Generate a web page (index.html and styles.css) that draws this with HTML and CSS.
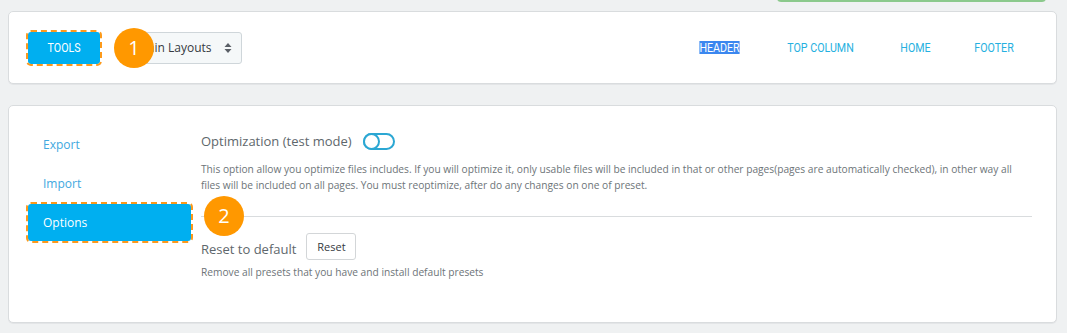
FILE: index.html
```html
<!DOCTYPE html>
<html>
<head>
<meta charset="utf-8">
<link rel="stylesheet" href="styles.css">
</head>
<body>
<div class="alert-strip"></div>
<div class="card toolbar">
  <div class="tools-wrap">
    <button class="tools-btn"><span class="cond">TOOLS</span></button>
    <span class="badge badge-1">1</span>
  </div>
  <div class="layout-select">
    <span class="sel-text">Main Layouts</span>
    <svg class="sel-arrow" width="8" height="12" viewBox="0 0 8 12"><path d="M4 1 L7.5 5 H0.5 Z M4 11 L7.5 7 H0.5 Z" fill="#5a5f66"/></svg>
  </div>
  <nav class="nav">
    <a class="nav-item"><span class="cond sel">HEADER</span></a>
    <a class="nav-item"><span class="cond">TOP COLUMN</span></a>
    <a class="nav-item"><span class="cond">HOME</span></a>
    <a class="nav-item"><span class="cond">FOOTER</span></a>
  </nav>
</div>

<div class="card panel">
  <ul class="tabs">
    <li class="tab">Export</li>
    <li class="tab">Import</li>
    <li class="tab active">Options</li>
  </ul>
  <div class="content">
    <div class="opt-row">
      <span class="opt-title">Optimization (test mode)</span>
      <svg class="toggle" width="32" height="17" viewBox="0 0 32 17"><rect x="1" y="1" width="30" height="15" rx="7.5" fill="none" stroke="#2ba7d3" stroke-width="2"/><circle cx="8.5" cy="8.5" r="7.5" fill="#fff" stroke="#2ba7d3" stroke-width="2"/></svg>
    </div>
    <p class="desc desc-opt">This option allow you optimize files includes. If you will optimize it, only usable files will be included in that or other pages(pages are automatically checked), in other way all files will be included on all pages. You must reoptimize, after do any changes on one of preset.</p>
    <div class="divider">
      <span class="badge badge-2">2</span>
    </div>
    <div class="reset-row">
      <span class="opt-title">Reset to default</span>
      <button class="reset-btn">Reset</button>
    </div>
    <p class="desc desc-reset">Remove all presets that you have and install default presets</p>
  </div>
</div>
</body>
</html>
```

FILE: styles.css
```css
* { box-sizing: border-box; }
html, body { margin: 0; }
body {
  background: #eff1f2;
  padding: 0 10px 0 8px;
  font-family: "Open Sans", "DejaVu Sans", sans-serif;
  position: relative;
  height: 333px;
  overflow: hidden;
}
.alert-strip {
  position: absolute;
  left: 777px;
  top: -6px;
  width: 269px;
  height: 8px;
  background: #8bc98c;
  border-radius: 0 0 4px 4px;
}
.card {
  background: #fff;
  border: 1px solid #d9dcde;
  border-radius: 5px;
  box-shadow: 0 1px 0 #e3e5e7;
}
.toolbar {
  margin-top: 11px;
  height: 73px;
  display: flex;
  align-items: center;
  padding: 0 19px;
}
.cond {
  display: inline-block;
  font-family: "Roboto", sans-serif;
  transform: scaleX(0.82);
  transform-origin: center;
}
.tools-wrap { position: relative; z-index: 2; }
.tools-btn {
  display: block;
  width: 72px;
  height: 32px;
  border: none;
  border-radius: 3px;
  background: #00aff0;
  color: #fff;
  font-size: 13px;
  outline: 2px dashed #fd9a1b;
  outline-offset: 0px;
  padding: 0;
}
.badge {
  position: absolute;
  width: 40px;
  height: 40px;
  border-radius: 50%;
  background: #ff9800;
  color: #fff;
  font-family: "Open Sans", sans-serif;
  font-size: 20px;
  line-height: 40px;
  text-align: center;
}
.badge-1 { left: 86px; top: -4px; }
.layout-select {
  margin-left: 24px;
  width: 118px;
  height: 32px;
  background: #f5f8f9;
  border: 1px solid #cfd6da;
  border-radius: 3px;
  display: flex;
  align-items: center;
  padding: 0 9px 0 12px;
  font-size: 12px;
  color: #363a41;
  position: relative;
  z-index: 1;
}
.sel-text { flex: 1; white-space: nowrap; }
.sel-arrow { display: block; }
.nav {
  margin-left: auto;
  display: flex;
  align-items: center;
}
.nav-item {
  padding: 0 18px;
  font-size: 13px;
  color: #25b0e0;
  line-height: 13px;
}
.nav-item:last-child { padding-right: 19px; }
.sel {
  background: #3b87ef;
  color: #fff;
}
.panel {
  margin-top: 21px;
  height: 218px;
  display: flex;
  padding: 20px 24px 0 19px;
}
.tabs {
  list-style: none;
  margin: 0;
  padding: 0;
  width: 163px;
  flex: none;
}
.tab {
  height: 37px;
  line-height: 37px;
  margin-bottom: 2px;
  padding-left: 15px;
  font-size: 12px;
  color: #41a8e0;
  border-radius: 3px;
}
.tab.active {
  background: #00aff0;
  color: #fff;
  outline: 2px dashed #fd9a1b;
  outline-offset: 0px;
}
.content {
  flex: 1;
  margin-left: 10px;
  padding-top: 5px;
}
.opt-row {
  display: flex;
  align-items: center;
  height: 20px;
}
.opt-title {
  font-size: 13px;
  color: #5e676c;
}
.toggle { margin-left: 11px; display: block; margin-top: 1px; }
.desc {
  margin: 0;
  font-size: 10.2px;
  line-height: 16px;
  color: #6d7478;
}
.desc-opt { margin-top: 10px; }
.divider {
  position: relative;
  margin-top: 23px;
  border-top: 1px solid #d9dcde;
}
.badge-2 { left: 3px; top: -21px; }
.reset-row {
  margin-top: 16px;
  display: flex;
  align-items: center;
  height: 28px;
}
.reset-row .opt-title { position: relative; top: 2px; }
.reset-btn {
  margin-left: 10px;
  height: 27px;
  width: 50px;
  padding: 0;
  background: #fff;
  border: 1px solid #d3d6d8;
  border-radius: 3px;
  font-family: "Open Sans", sans-serif;
  font-size: 11px;
  color: #363a41;
  position: relative;
  top: -1px;
}
.desc-reset { margin-top: 3px; }
```
